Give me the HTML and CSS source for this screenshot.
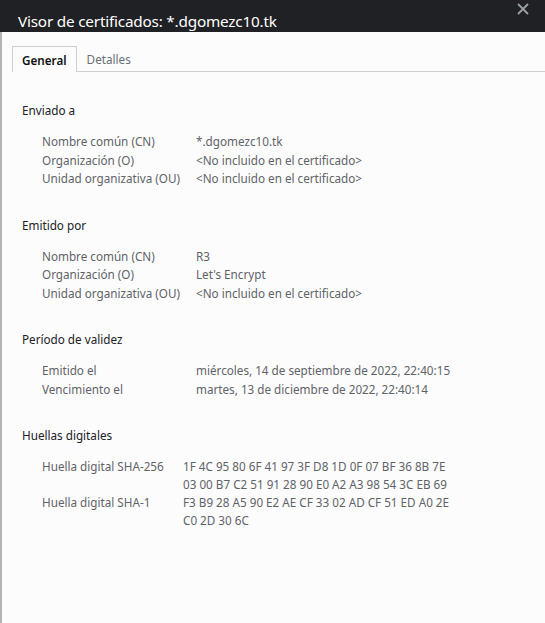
FILE: index.html
```html
<!DOCTYPE html>
<html lang="es">
<head>
<meta charset="utf-8">
<title>Visor de certificados</title>
<link rel="stylesheet" href="styles.css">
</head>
<body>
<div class="window">
  <header class="titlebar">
    <span class="title">Visor de certificados: *.dgomezc10.tk</span>
    <svg class="close" width="12" height="12" viewBox="0 0 12 12"><path d="M1 1L11 11M11 1L1 11" stroke="#9aa0a6" stroke-width="1.8" fill="none"/></svg>
  </header>
  <div class="panel">
    <nav class="tabs">
      <div class="tab active">General</div>
      <div class="tab">Detalles</div>
      <div class="tab-fill"></div>
    </nav>
    <main class="content">
      <section class="section">
        <h2 class="heading">Enviado a</h2>
        <div class="rows">
          <div class="label">Nombre común (CN)</div><div class="value">*.dgomezc10.tk</div>
          <div class="label">Organización (O)</div><div class="value">&lt;No incluido en el certificado&gt;</div>
          <div class="label">Unidad organizativa (OU)</div><div class="value">&lt;No incluido en el certificado&gt;</div>
        </div>
      </section>
      <section class="section">
        <h2 class="heading">Emitido por</h2>
        <div class="rows">
          <div class="label">Nombre común (CN)</div><div class="value">R3</div>
          <div class="label">Organización (O)</div><div class="value">Let's Encrypt</div>
          <div class="label">Unidad organizativa (OU)</div><div class="value">&lt;No incluido en el certificado&gt;</div>
        </div>
      </section>
      <section class="section">
        <h2 class="heading">Período de validez</h2>
        <div class="rows">
          <div class="label">Emitido el</div><div class="value">miércoles, 14 de septiembre de 2022, 22:40:15</div>
          <div class="label">Vencimiento el</div><div class="value">martes, 13 de diciembre de 2022, 22:40:14</div>
        </div>
      </section>
      <section class="section">
        <h2 class="heading">Huellas digitales</h2>
        <div class="rows fp">
          <div class="label">Huella digital SHA-256</div><div class="value">1F 4C 95 80 6F 41 97 3F D8 1D 0F 07 BF 36 8B 7E<br>03 00 B7 C2 51 91 28 90 E0 A2 A3 98 54 3C EB 69</div>
          <div class="label">Huella digital SHA-1</div><div class="value">F3 B9 28 A5 90 E2 AE CF 33 02 AD CF 51 ED A0 2E<br>C0 2D 30 6C</div>
        </div>
      </section>
    </main>
  </div>
</div>
</body>
</html>
```

FILE: styles.css
```css
* { box-sizing: border-box; }
html, body {
  margin: 0;
  padding: 0;
  height: 100%;
  background: #fcfcfc;
}
body {
  font-family: "Noto Sans", "Open Sans", "DejaVu Sans", sans-serif;
  font-size: 11.7px;
  overflow: hidden;
}
.window {
  height: 623px;
  display: flex;
  flex-direction: column;
}
.titlebar {
  height: 32px;
  background: #202124;
  color: #ffffff;
  display: flex;
  align-items: flex-end;
  padding: 0 16px 1px 18px;
  position: relative;
}
.title {
  font-size: 15.3px;
  line-height: 20px;
  letter-spacing: -0.2px;
}
.close {
  position: absolute;
  right: 16px;
  top: 3px;
}
.panel {
  flex: 1;
  border-left: 2px solid #b4b4b4;
  background: #fcfcfc;
  padding-top: 14px;
}
.tabs {
  display: flex;
  align-items: stretch;
  height: 26px;
  padding-left: 10px;
}
.tab {
  padding: 0 10px;
  display: flex;
  align-items: center;
  color: #6a6f75;
  border-bottom: 1px solid #cfcfcf;
  font-size: 11.7px;
}
.tab.active {
  color: #111;
  font-weight: 600;
  border: 1px solid #cfcfcf;
  border-bottom: none;
  padding: 0 9px;
  background: #fcfcfc;
}
.tab-fill {
  flex: 1;
  border-bottom: 1px solid #cfcfcf;
}
.content {
  padding: 29px 0 0 20px;
}
.section {
  margin-bottom: 28px;
}
.heading {
  margin: 0 0 12.5px 0;
  font-size: 11.7px;
  font-weight: normal;
  color: #202124;
  line-height: 18.5px;
}
.rows {
  display: grid;
  grid-template-columns: 154px 1fr;
  padding-left: 20px;
  line-height: 18.5px;
  color: #5f6368;
}
.rows.fp {
  grid-template-columns: 141px 1fr;
  line-height: 18px;
}
.value { white-space: nowrap; }
```
